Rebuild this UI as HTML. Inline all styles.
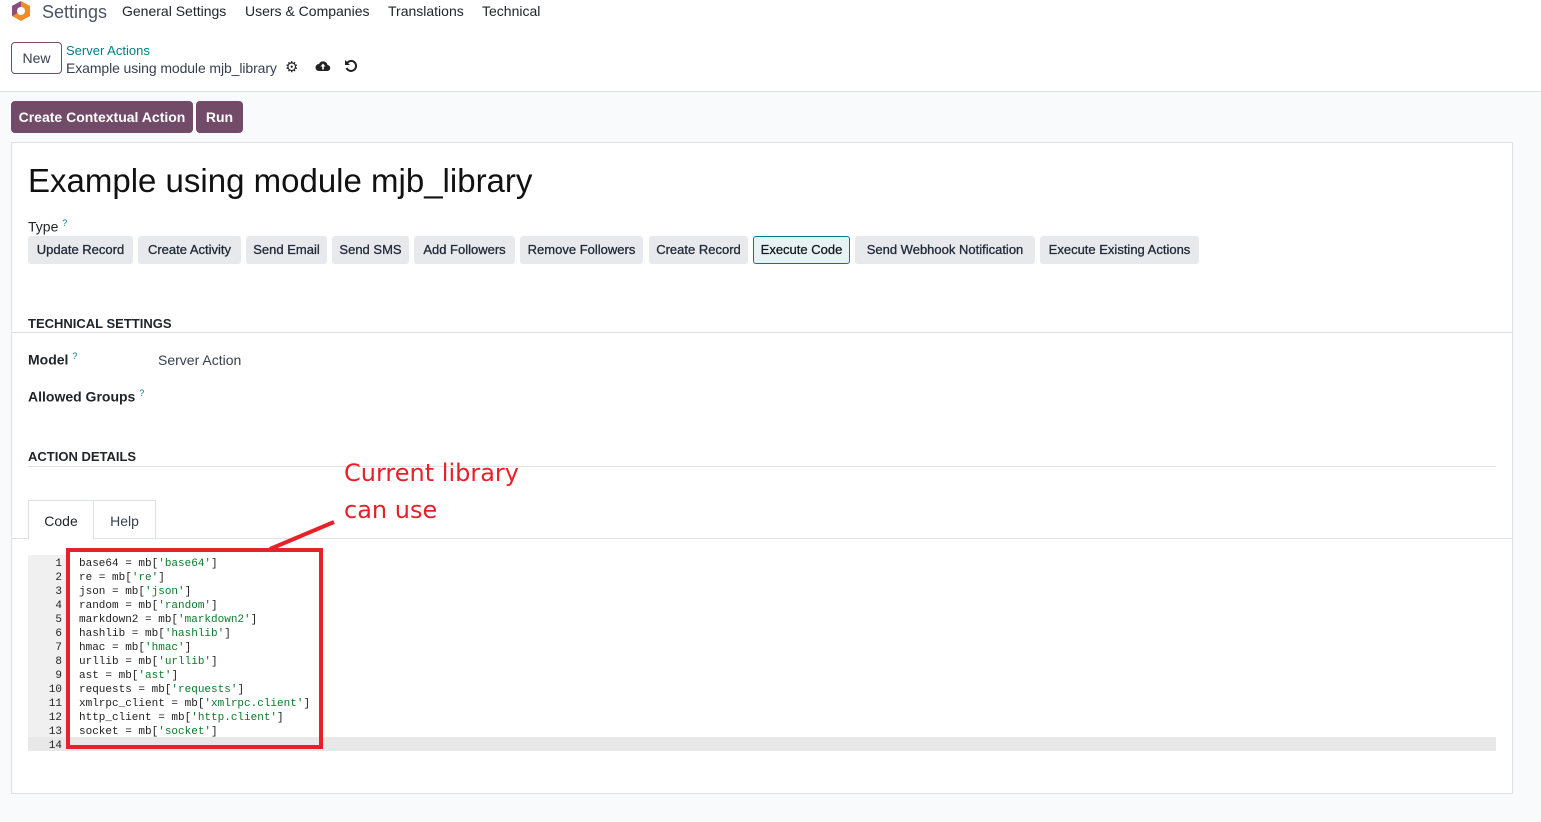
<!DOCTYPE html>
<html><head><meta charset="utf-8"><style>
*{box-sizing:border-box;margin:0;padding:0}
body{width:1541px;height:822px;overflow:hidden;font-family:"Liberation Sans",sans-serif;background:#f9fafb;position:relative;color:#212529}
.a{position:absolute;white-space:nowrap}
.top{position:absolute;left:0;top:0;width:1541px;height:92px;background:#fff;border-bottom:1px solid #dee2e6}
.nav{font-size:14px;color:#212529;top:3px}
.tb{position:absolute;top:236px;height:28px;background:#e7e9ed;border-radius:3px;font-size:13px;color:#1f2937;text-align:center;line-height:28px;-webkit-text-stroke:0.3px #1f2937}
.sec{font-size:13px;font-weight:bold;color:#212529}
.code{font-family:"Liberation Mono",monospace;font-size:11px;line-height:14px}
.s{color:#0a7a2a}
</style></head><body>
<div class="top"></div>
<svg class="a" style="left:10px;top:0" width="22" height="22" viewBox="0 0 22 22"><polygon points="11,1 20,6 20,16 11,21 2,16 2,6" fill="#f08a2a"/><polygon points="11,1 2,6 2,16 11,11" fill="#8b4d7e"/><circle cx="11" cy="11" r="4" fill="#fff"/></svg>
<div class="a" style="left:42px;top:2px;font-size:18px;color:#4b5563">Settings</div>
<div class="a nav" style="left:122px">General Settings</div>
<div class="a nav" style="left:245px">Users &amp; Companies</div>
<div class="a nav" style="left:388px">Translations</div>
<div class="a nav" style="left:482px">Technical</div>
<div class="a" style="left:11px;top:42px;width:51px;height:32px;border:1px solid #714b67;border-radius:4px;font-size:14px;text-align:center;line-height:30px;color:#374151">New</div>
<div class="a" style="left:66px;top:43px;font-size:13px;color:#017e84">Server Actions</div>
<div class="a" style="left:66px;top:60px;font-size:14px;color:#374151;letter-spacing:-0.1px">Example using module mjb_library</div>
<div class="a" style="left:285px;top:58px;font-size:15px;color:#222">⚙</div>
<svg class="a" style="left:315px;top:59px" width="16" height="13" viewBox="0 0 16 13"><path d="M4 12a3.5 3.5 0 010-7 4.5 4.5 0 018.5 1A3 3 0 0112 12z" fill="#222"/><path d="M8 4.5l-2.5 3h1.7v3h1.6v-3h1.7z" fill="#fff"/></svg>
<svg class="a" style="left:344px;top:59px" width="14" height="14" viewBox="0 0 14 14"><path d="M3 4a5 5 0 11-.5 5" fill="none" stroke="#222" stroke-width="2"/><path d="M1 1v5h5z" fill="#222"/></svg>
<div class="a" style="left:11px;top:101px;width:182px;height:32px;background:#714b67;border-radius:4px;color:#fff;font-size:14px;font-weight:bold;line-height:32px;text-align:center">Create Contextual Action</div>
<div class="a" style="left:196px;top:101px;width:47px;height:32px;background:#714b67;border-radius:4px;color:#fff;font-size:14px;font-weight:bold;line-height:32px;text-align:center">Run</div>
<div class="a" style="left:11px;top:142px;width:1502px;height:652px;background:#fff;border:1px solid #dee2e6"></div>
<div class="a" style="left:28px;top:162px;font-size:33px;color:#111">Example using module mjb_library</div>
<div class="a" style="left:28px;top:218px;font-size:14px">Type <sup style="color:#017e84;font-size:9px">?</sup></div>
<div class="tb" style="left:28px;width:105px">Update Record</div>
<div class="tb" style="left:138px;width:103px">Create Activity</div>
<div class="tb" style="left:246px;width:81px">Send Email</div>
<div class="tb" style="left:332px;width:77px">Send SMS</div>
<div class="tb" style="left:414px;width:101px">Add Followers</div>
<div class="tb" style="left:520px;width:123px">Remove Followers</div>
<div class="tb" style="left:649px;width:99px">Create Record</div>
<div class="tb" style="left:753px;width:97px;background:#e6f2f3;border:1px solid #017e84;line-height:26px;color:#111">Execute Code</div>
<div class="tb" style="left:855px;width:180px">Send Webhook Notification</div>
<div class="tb" style="left:1040px;width:159px">Execute Existing Actions</div>
<div class="a sec" style="left:28px;top:316px">TECHNICAL SETTINGS</div>
<div class="a" style="left:12px;top:332px;width:1500px;height:1px;background:#dee2e6"></div>
<div class="a" style="left:28px;top:351px;font-size:14px;font-weight:bold">Model <sup style="color:#017e84;font-size:9px;font-weight:normal">?</sup></div>
<div class="a" style="left:158px;top:352px;font-size:14px;color:#374151">Server Action</div>
<div class="a" style="left:28px;top:388px;font-size:14px;font-weight:bold">Allowed Groups <sup style="color:#017e84;font-size:9px;font-weight:normal">?</sup></div>
<div class="a sec" style="left:28px;top:449px">ACTION DETAILS</div>
<div class="a" style="left:28px;top:466px;width:1468px;height:1px;background:#dee2e6"></div>
<div class="a" style="left:344px;top:455px;font-size:24px;color:#e8202a;line-height:37px;font-family:'DejaVu Sans',sans-serif">Current library<br>can use</div>
<div class="a" style="left:12px;top:538px;width:1500px;height:1px;background:#dee2e6"></div>
<div class="a" style="left:28px;top:500px;width:66px;height:39px;background:#fff;border:1px solid #dee2e6;border-bottom:none;font-size:14px;text-align:center;line-height:40px">Code</div>
<div class="a" style="left:94px;top:500px;width:62px;height:38px;border:1px solid #dee2e6;border-left:none;border-bottom:none;font-size:14px;text-align:center;line-height:40px;color:#374151">Help</div>
<div class="a" style="left:28px;top:555px;width:40px;height:196px;background:#f0f0f0"></div>
<div class="a" style="left:28px;top:737px;width:1468px;height:14px;background:#e8e8e8"></div>
<div class="a code" style="left:28px;top:557px;width:34px;text-align:right;color:#222">1<br>2<br>3<br>4<br>5<br>6<br>7<br>8<br>9<br>10<br>11<br>12<br>13<br>14</div>
<div class="a code" style="left:79px;top:557px;color:#222">base64 = mb[<span class="s">'base64'</span>]<br>re = mb[<span class="s">'re'</span>]<br>json = mb[<span class="s">'json'</span>]<br>random = mb[<span class="s">'random'</span>]<br>markdown2 = mb[<span class="s">'markdown2'</span>]<br>hashlib = mb[<span class="s">'hashlib'</span>]<br>hmac = mb[<span class="s">'hmac'</span>]<br>urllib = mb[<span class="s">'urllib'</span>]<br>ast = mb[<span class="s">'ast'</span>]<br>requests = mb[<span class="s">'requests'</span>]<br>xmlrpc_client = mb[<span class="s">'xmlrpc.client'</span>]<br>http_client = mb[<span class="s">'http.client'</span>]<br>socket = mb[<span class="s">'socket'</span>]</div>
<div class="a" style="left:66px;top:548px;width:257px;height:201px;border:4px solid #e8202a"></div>
<svg class="a" style="left:260px;top:515px" width="80" height="40"><line x1="74" y1="7" x2="10" y2="34" stroke="#e8202a" stroke-width="4"/></svg>
</body></html>
